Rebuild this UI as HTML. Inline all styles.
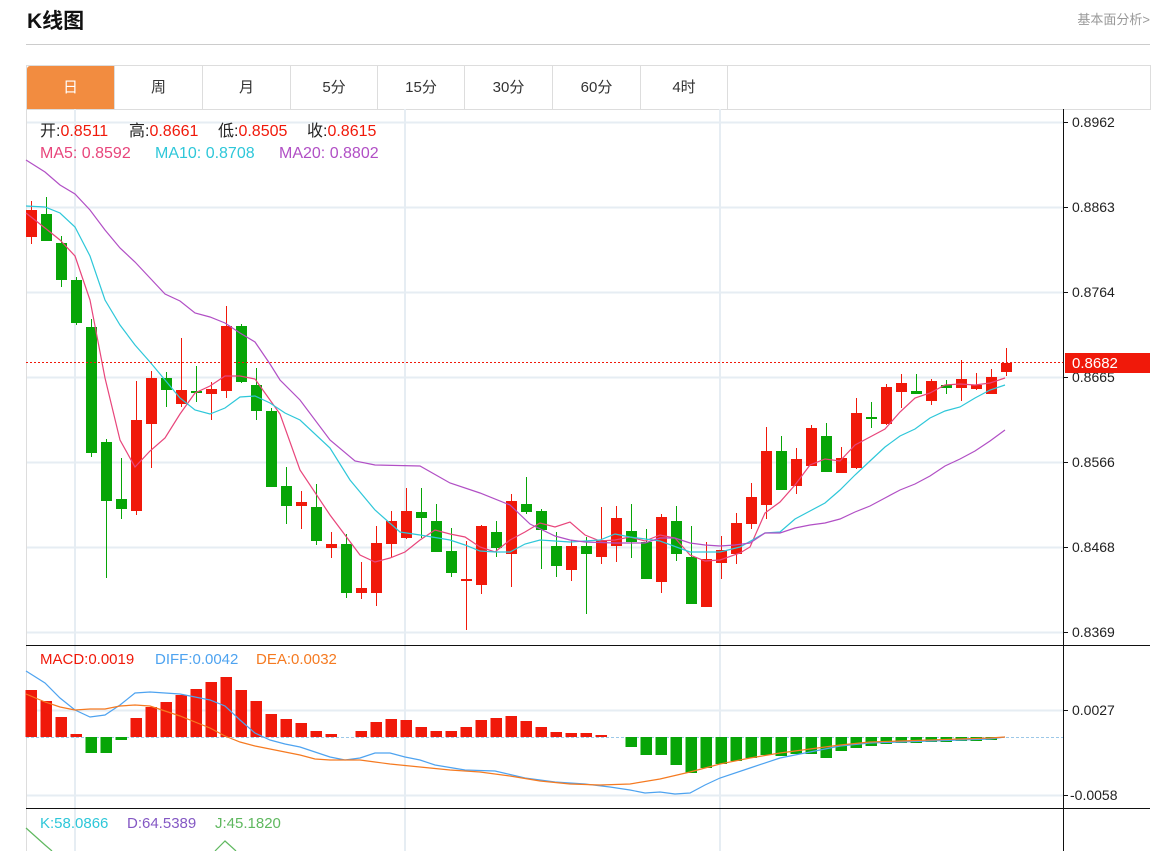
<!DOCTYPE html>
<html><head><meta charset="utf-8">
<style>
body{margin:0;width:1152px;height:851px;overflow:hidden;background:#fff;font-family:"Liberation Sans","Noto Sans CJK SC",sans-serif;position:relative}
.t{position:absolute;white-space:nowrap}
.tabs{position:absolute;left:26px;top:65px;width:1123px;height:43px;border:1px solid #ddd;}
.tab{position:absolute;top:0;height:43px;line-height:43px;text-align:center;font-size:15px;color:#333;border-right:1px solid #ddd;box-sizing:border-box}
svg{position:absolute;left:0;top:0}
.r{color:#f0190a}
</style></head><body>
<div class="t" style="left:27px;top:5px;font-size:21px;font-weight:bold;color:#111">K线图</div>
<div class="t" style="right:2px;top:9px;font-size:13px;color:#999">基本面分析&gt;</div>
<div style="position:absolute;left:26px;top:44px;width:1124px;height:1px;background:#ccc"></div>
<div class="tabs">
<div class="tab" style="left:0;width:88px;background:#f28c40;color:#fff;border-radius:3px 0 0 0">日</div>
<div class="tab" style="left:88px;width:88px">周</div>
<div class="tab" style="left:176px;width:88px">月</div>
<div class="tab" style="left:264px;width:87px">5分</div>
<div class="tab" style="left:351px;width:87px">15分</div>
<div class="tab" style="left:438px;width:88px">30分</div>
<div class="tab" style="left:526px;width:88px">60分</div>
<div class="tab" style="left:614px;width:87px">4时</div>
</div>
<svg id="s" width="1152" height="851"></svg>
<div class="t" style="left:40px;top:117px;font-size:16px;color:#222">开:<span class="r">0.8511</span></div>
<div class="t" style="left:129px;top:117px;font-size:16px;color:#222">高:<span class="r">0.8661</span></div>
<div class="t" style="left:218px;top:117px;font-size:16px;color:#222">低:<span class="r">0.8505</span></div>
<div class="t" style="left:307px;top:117px;font-size:16px;color:#222">收:<span class="r">0.8615</span></div>
<div class="t" style="left:40px;top:145px;font-size:16px;color:#e8457b">MA5: 0.8592</div>
<div class="t" style="left:155px;top:145px;font-size:16px;color:#2ec7d9">MA10: 0.8708</div>
<div class="t" style="left:279px;top:145px;font-size:16px;color:#b14fc5">MA20: 0.8802</div>
<div class="t" style="left:40px;top:651px;font-size:15px;color:#f0190a">MACD:0.0019</div>
<div class="t" style="left:155px;top:651px;font-size:15px;color:#4ea3f0">DIFF:0.0042</div>
<div class="t" style="left:256px;top:651px;font-size:15px;color:#f57a21">DEA:0.0032</div>
<div class="t" style="left:40px;top:815px;font-size:15px;color:#2ec7d9">K:58.0866</div>
<div class="t" style="left:127px;top:815px;font-size:15px;color:#8458c4">D:64.5389</div>
<div class="t" style="left:215px;top:815px;font-size:15px;color:#5fb85f">J:45.1820</div>
<script>
var s=document.getElementById('s'),h='';
function L(x1,y1,x2,y2,c,w,d){h+='<line x1="'+x1+'" y1="'+y1+'" x2="'+x2+'" y2="'+y2+'" stroke="'+c+'" stroke-width="'+(w||1)+'"'+(d?' stroke-dasharray="'+d+'"':'')+'/>';}
function P(pts,c){h+='<polyline fill="none" stroke="'+c+'" stroke-width="1.2" points="'+pts.map(function(p){return p.join(',')}).join(' ')+'"/>';}
function T(x,y,t,c,sz){h+='<text x="'+x+'" y="'+y+'" fill="'+(c||'#222')+'" font-size="'+(sz||14)+'" font-family="Liberation Sans, sans-serif">'+t+'</text>';}
[122,207,292,377,462,547,632,710,795].forEach(function(y){L(26,y+.5,1063,y+.5,'#e6edf3',2);});
[75,405,720].forEach(function(x){L(x,109,x,851,'#e6edf3',2);});
L(26.5,109,26.5,851,'#ddd',1);
L(26,645.5,1150,645.5,'#111',1);L(26,808.5,1150,808.5,'#111',1);
L(1063.5,109,1063.5,851,'#111',1);
var ax=[[122,'0.8962'],[207,'0.8863'],[292,'0.8764'],[377,'0.8665'],[462,'0.8566'],[547,'0.8468'],[632,'0.8369'],[710,'0.0027'],[795,'-0.0058']];
ax.forEach(function(a){L(1063,a[0]+.5,1068,a[0]+.5,'#111',1);T(a[1][0]=='-'?1070:1072,a[0]+5,a[1],'#222',14);});
var C=[[210,237,201,244,'r'],[214,241,197,241,'g'],[243,280,236,287,'g'],[280,323,277,325,'g'],[327,453,319,457,'g'],[442,501,439,578,'g'],[499,509,458,519,'g'],[420,511,381,515,'r'],[378,424,371,468,'r'],[378,390,372,407,'g'],[390,404,338,407,'r'],[391,393,366,402,'g'],[389,394,382,420,'r'],[326,391,306,398,'r'],[326,382,324,383,'g'],[385,411,368,420,'g'],[411,487,408,487,'g'],[486,506,467,524,'g'],[502,506,491,529,'r'],[507,541,484,545,'g'],[544,548,532,558,'r'],[544,593,534,598,'g'],[588,593,562,599,'r'],[543,593,526,606,'r'],[521,544,511,557,'r'],[511,538,488,539,'r'],[512,518,488,538,'g'],[521,552,504,552,'g'],[551,573,528,577,'g'],[579,581,541,630,'r'],[526,585,525,594,'r'],[532,548,521,557,'g'],[501,554,494,587,'r'],[504,512,477,514,'g'],[511,530,509,569,'g'],[546,566,532,577,'g'],[546,570,540,581,'r'],[546,554,537,614,'g'],[540,557,507,564,'r'],[518,546,506,562,'r'],[531,542,504,558,'g'],[542,579,529,579,'g'],[517,582,514,593,'r'],[521,554,506,561,'g'],[557,604,526,604,'g'],[559,607,542,607,'r'],[550,563,536,579,'r'],[523,554,513,564,'r'],[497,524,483,529,'r'],[451,505,427,519,'r'],[451,490,436,490,'g'],[459,486,448,494,'r'],[428,466,425,466,'r'],[436,472,423,472,'g'],[458,473,447,473,'r'],[413,468,398,469,'r'],[417,418,402,428,'g'],[387,424,384,425,'r'],[383,392,374,408,'r'],[391,394,374,394,'g'],[381,401,379,405,'r'],[385,388,380,394,'g'],[379,388,360,401,'r'],[385,389,373,390,'r'],[377,394,369,394,'r'],[363,372,348,376,'r']];
C.forEach(function(c,i){var x=31+15*i,col=c[4]=='r'?'#f0190a':'#07a507';L(x+.5,c[2],x+.5,c[3],col,1);h+='<rect x="'+(x-5)+'" y="'+c[0]+'" width="11" height="'+Math.max(2,c[1]-c[0])+'" fill="'+col+'"/>';});
P([[26,213],[45,228],[60,240],[75,256],[90,300],[105,378],[120,440],[135,467],[150,451],[165,438],[180,414],[195,393],[210,386],[225,376],[240,376],[255,379],[270,400],[280,414],[300,470],[330,515],[360,555],[375,562],[390,558],[405,552],[420,540],[435,530],[450,534],[465,537],[480,547],[495,552],[510,540],[525,532],[540,523],[555,527],[570,522],[585,535],[600,541],[615,540],[630,537],[645,541],[660,535],[675,538],[690,555],[705,561],[720,560],[740,553],[750,547],[765,513],[780,502],[795,485],[810,465],[825,459],[840,461],[855,445],[870,437],[885,429],[900,412],[915,398],[930,393],[945,385],[960,384],[975,385],[990,383],[1005,378]],'#e8457b');
P([[26,206],[45,207],[60,213],[75,227],[90,256],[105,300],[120,325],[135,345],[150,362],[165,380],[180,398],[195,410],[210,414],[225,408],[240,397],[255,396],[270,403],[285,413],[300,420],[330,448],[350,480],[375,510],[400,532],[420,535],[450,540],[465,545],[480,551],[495,552],[510,552],[525,544],[540,540],[555,541],[570,542],[600,540],[615,534],[630,537],[660,541],[690,552],[720,552],[740,547],[765,533],[780,532],[795,519],[810,511],[825,503],[840,490],[855,475],[870,461],[885,447],[900,436],[915,429],[930,418],[945,411],[960,407],[975,398],[990,390],[1005,385]],'#2ec7d9');
P([[26,160],[45,172],[60,185],[75,194],[90,210],[105,230],[120,248],[135,262],[150,278],[165,294],[180,301],[195,313],[210,317],[225,323],[240,333],[255,342],[270,364],[280,380],[300,400],[330,440],[355,461],[375,465],[420,466],[450,483],[480,493],[510,505],[530,524],[555,536],[570,540],[585,542],[615,543],[645,543],[660,538],[675,538],[690,543],[705,545],[720,546],[735,545],[750,543],[765,533],[780,533],[795,528],[810,525],[825,523],[840,519],[855,512],[870,506],[885,498],[900,490],[915,484],[930,476],[945,466],[960,459],[975,451],[990,441],[1005,430]],'#b14fc5');
L(26,362.5,1063,362.5,'#f0190a',1,'2,2');
h+='<rect x="1065" y="353" width="85" height="20" fill="#f0190a"/>';
T(1072,368,'0.8682','#fff',15);
L(26,737.5,1063,737.5,'#9cc8e8',1,'3,2');
var M=[690,701,717,734,753,753,740,718,707,702,695,689,682,677,690,701,714,719,723,731,734,737,731,722,719,720,727,731,731,727,720,718,716,721,727,732,733,733,735,737,747,755,755,765,773,768,764,761,758,755,756,754,754,758,751,748,746,744,743,743,742,742,741,741,740];
M.forEach(function(y,i){var x=31+15*i;if(y<737)h+='<rect x="'+(x-5.5)+'" y="'+y+'" width="11.5" height="'+(737-y)+'" fill="#f0190a"/>';else if(y>737)h+='<rect x="'+(x-5.5)+'" y="737" width="11.5" height="'+(y-737)+'" fill="#07a507"/>';});
P([[26,671],[45,683],[60,698],[75,710],[90,717],[105,715],[120,705],[135,693],[150,692],[165,693],[180,694],[195,697],[210,700],[225,706],[240,720],[255,733],[270,740],[285,744],[300,747],[315,752],[330,757],[345,760],[360,758],[375,753],[390,753],[405,757],[420,760],[435,765],[465,770],[495,771],[525,778],[555,782],[585,784],[610,787],[630,790],[645,793],[660,792],[675,794],[690,793],[705,785],[720,778],[750,768],[780,758],[810,752],[840,746],[870,743],[900,742],[930,741],[960,740],[990,739],[1005,737]],'#4ea3f0');
P([[26,694],[45,702],[60,707],[75,710],[90,709],[105,709],[120,706],[135,705],[150,706],[165,711],[180,716],[195,722],[210,728],[225,736],[240,742],[255,746],[270,749],[285,752],[300,755],[315,759],[330,760],[360,760],[375,762],[390,764],[420,767],[450,770],[480,772],[510,776],[540,781],[570,784],[600,785],[630,784],[660,779],[690,772],[720,764],[750,758],[780,753],[810,749],[840,745],[870,742],[900,741],[930,740],[960,739],[990,738],[1005,737]],'#f57a21');
P([[26,828],[45,845],[52,851]],'#5fb85f');
P([[215,851],[225,841],[236,851]],'#5fb85f');
s.innerHTML=h;
</script>
</body></html>
